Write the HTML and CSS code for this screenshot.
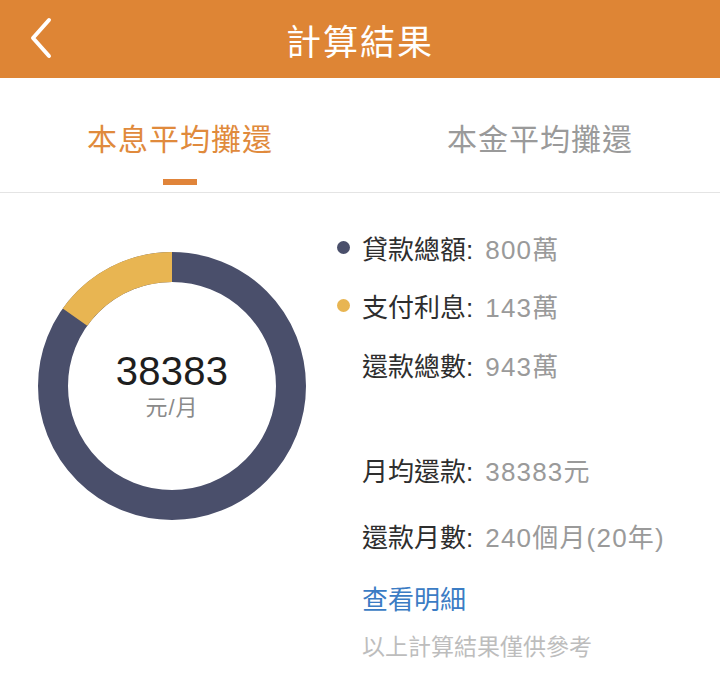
FILE: index.html
```html
<!DOCTYPE html>
<html lang="zh-Hant">
<head>
<meta charset="utf-8">
<title>計算結果</title>
<link rel="stylesheet" href="styles.css">
</head>
<body>
<header class="topbar">
  <button class="back" aria-label="返回">
    <svg width="24" height="42" viewBox="0 0 24 42"><polyline points="20,3 4,21 20,39" fill="none" stroke="#fff" stroke-width="4" stroke-linecap="round" stroke-linejoin="round"/></svg>
  </button>
  <h1 class="title">計算結果</h1>
</header>
<nav class="tabs">
  <div class="tab active"><span class="tab-label">本息平均攤還</span><span class="tab-bar"></span></div>
  <div class="tab"><span class="tab-label">本金平均攤還</span></div>
</nav>
<main class="content">
  <div class="chart">
    <svg class="donut" width="268" height="268" viewBox="0 0 268 268">
      <circle cx="134" cy="134" r="119" fill="none" stroke="#4A4F6B" stroke-width="30"/>
      <path d="M134 15 A119 119 0 0 0 37.0 65.1" fill="none" stroke="#E8B552" stroke-width="30"/>
    </svg>
    <div class="chart-center">
      <div class="chart-num">38383</div>
      <div class="chart-unit">元/月</div>
    </div>
  </div>
  <div class="info">
    <div class="row r1"><span class="dot navy"></span><span class="label">貸款總額:</span><span class="val">800萬</span></div>
    <div class="row r2"><span class="dot gold"></span><span class="label">支付利息:</span><span class="val">143萬</span></div>
    <div class="row r3"><span class="label">還款總數:</span><span class="val">943萬</span></div>
    <div class="row r4"><span class="label">月均還款:</span><span class="val">38383元</span></div>
    <div class="row r5"><span class="label">還款月數:</span><span class="val">240個月(20年)</span></div>
    <div class="row r6"><a class="link">查看明細</a></div>
    <div class="row r7 note">以上計算結果僅供參考</div>
  </div>
</main>
</body>
</html>
```

FILE: styles.css
```css
* { box-sizing: border-box; }
body {
  margin: 0;
  width: 720px;
  background: #fff;
  font-family: "Liberation Sans", "Noto Sans CJK TC", sans-serif;
  color: #333;
}
.topbar {
  height: 78px;
  background: #DE8535;
  display: flex;
  align-items: center;
  justify-content: center;
  position: relative;
}
.back {
  position: absolute;
  left: 29px;
  top: 17px;
  border: 0;
  background: none;
  padding: 0;
  width: 24px;
  height: 42px;
}
.back svg { display: block; }
.title {
  margin: 0;
  color: #fff;
  font-family: "Noto Sans CJK TC", sans-serif;
  font-weight: 400;
  font-size: 35px;
  letter-spacing: 2px;
  line-height: 1;
}
.tabs {
  display: flex;
  height: 115px;
  border-bottom: 1px solid #E4E4E4;
}
.tab {
  flex: 1;
  display: flex;
  flex-direction: column;
  align-items: center;
  padding-top: 41px;
}
.tab-label {
  font-family: "Noto Sans CJK TC", sans-serif;
  font-size: 30px;
  line-height: 36px;
  color: #9A9A9A;
  letter-spacing: 1px;
}
.tab.active .tab-label { color: #E08A3C; }
.tab-bar {
  margin-top: 24px;
  width: 34px;
  height: 6px;
  background: #E0843A;
}
.content {
  display: flex;
  padding-left: 38px;
}
.chart {
  position: relative;
  width: 268px;
  height: 268px;
  margin-top: 59px;
  flex: none;
}
.donut { display: block; }
.chart-center {
  position: absolute;
  left: 0;
  right: 0;
  top: 96px;
  text-align: center;
}
.chart-num {
  font-size: 40px;
  line-height: 46px;
  color: #1E1E1E;
  letter-spacing: 0.3px;
}
.chart-unit {
  font-size: 22px;
  line-height: 30px;
  color: #8A8A8A;
  margin-top: -1px;
  letter-spacing: 1px;
}
.info {
  margin-left: 31px;
  padding-top: 37px;
  display: flex;
  flex-direction: column;
}
.row {
  display: flex;
  align-items: center;
  height: 34px;
  font-size: 26px;
  padding-left: 25px;
  position: relative;
}
.r2 { margin-top: 24px; }
.r3 { margin-top: 25px; }
.r4 { margin-top: 71px; }
.r5 { margin-top: 32px; }
.r6 { margin-top: 28px; }
.r7 { margin-top: 16px; height: 30px; }
.dot {
  position: absolute;
  left: 0;
  top: 11px;
  width: 13px;
  height: 13px;
  border-radius: 50%;
}
.dot.navy { background: #4A4F6B; }
.dot.gold { background: #E8B552; }
.label { color: #2E2E2E; }
.val { color: #9A9A9A; margin-left: 12px; letter-spacing: 1.2px; }
.link {
  color: #3B7CC4;
  font-size: 26px;
}
.note {
  font-size: 23px;
  color: #BDBDBD;
}
```
